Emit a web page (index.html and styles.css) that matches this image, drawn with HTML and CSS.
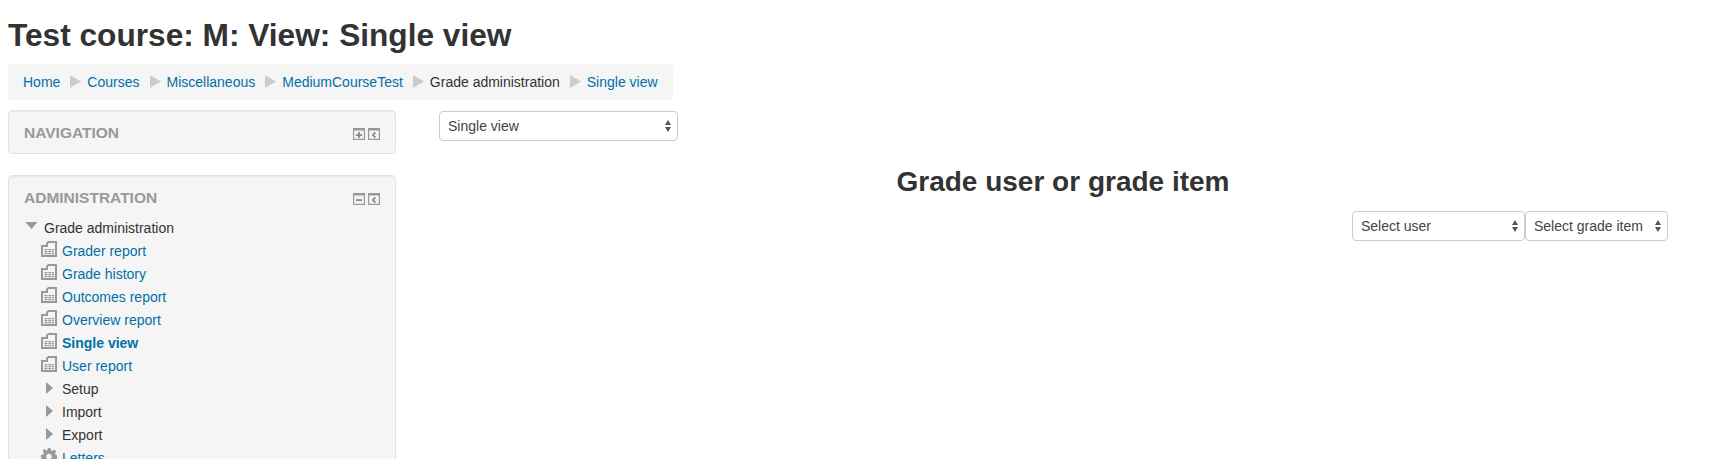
FILE: index.html
```html
<!DOCTYPE html>
<html lang="en">
<head>
<meta charset="utf-8">
<title>Test course: M: View: Single view</title>
<link rel="stylesheet" href="styles.css">
</head>
<body>
<svg class="defs" width="0" height="0" aria-hidden="true">
  <defs>
    <symbol id="sep" viewBox="0 0 11 13" preserveAspectRatio="none"><path d="M0 0L11 6.500L0 13Z" fill="#ccc"/></symbol>
    <symbol id="report" viewBox="0 0 16 16"><path fill-rule="evenodd" fill="#999" d="M0 4H5V2L7 0H16V16H0ZM2 6V14H14V2H7.500L7 3V6Z"/><path fill="#999" d="M3.500 8h3v1.200h-3zM7.300 8h3v1.200h-3zM11 8h2v1.200h-2zM3.500 10h3v1.200h-3zM7.300 10h3v1.200h-3zM11 10h2v1.200h-2zM3.500 12h3v1.200h-3zM7.300 12h3v1.200h-3zM11 12h2v1.200h-2z"/></symbol>
    <symbol id="gear" viewBox="0 0 16 16"><path fill-rule="evenodd" fill="#999" d="M6.500 0h3l.4 2.300 1.300.6L13.200 1.500l2.100 2.100-1.400 2 .6 1.400 2.500.5v3l-2.500.4-.6 1.400 1.400 2-2.100 2.100-2-1.400-1.300.5-.4 2.500h-3l-.4-2.500-1.400-.5-2 1.400-2.100-2.100 1.400-2-.6-1.400L0 10V7l2.300-.5.6-1.400-1.400-2L3.600 1l2 1.400 1.400-.6ZM8 5.700a2.800 2.800 0 1 0 .01 0Z"/></symbol>
    <symbol id="updown" viewBox="0 0 6 12"><path d="M3 0L6 5H0ZM3 12L0 7H6Z" fill="#555"/></symbol>
    <symbol id="ctl-plus" viewBox="0 0 12 12"><rect x=".6" y=".6" width="10.800" height="10.800" fill="#f4f4f4" stroke="#999" stroke-width="1.200"/><rect width="12" height="2.500" fill="#999"/><path d="M3 6.200h6v1.800H3zM5.100 4.100h1.800v6H5.100z" fill="#888"/></symbol>
    <symbol id="ctl-minus" viewBox="0 0 12 12"><rect x=".6" y=".6" width="10.800" height="10.800" fill="#f4f4f4" stroke="#999" stroke-width="1.200"/><rect width="12" height="2.500" fill="#999"/><path d="M3 6.200h6v1.800H3z" fill="#888"/></symbol>
    <symbol id="ctl-left" viewBox="0 0 12 12"><rect x=".6" y=".6" width="10.800" height="10.800" fill="#f4f4f4" stroke="#999" stroke-width="1.200"/><rect width="12" height="2.500" fill="#999"/><path d="M7.500 4.300L4.800 7L7.500 9.700" fill="none" stroke="#888" stroke-width="1.700"/></symbol>
  </defs>
</svg>

<header class="page-header">
  <h1 class="page-title">Test course: M: View: Single view</h1>
  <nav class="crumbs">
    <a href="#">Home</a><svg class="sep"><use href="#sep"/></svg>
    <a href="#">Courses</a><svg class="sep"><use href="#sep"/></svg>
    <a href="#">Miscellaneous</a><svg class="sep"><use href="#sep"/></svg>
    <a href="#">MediumCourseTest</a><svg class="sep"><use href="#sep"/></svg>
    <span>Grade administration</span><svg class="sep"><use href="#sep"/></svg>
    <a href="#">Single view</a>
  </nav>
</header>

<div class="layout">
  <aside class="side">
    <section class="block block-nav">
      <div class="block-head">
        <h2 class="block-title">NAVIGATION</h2>
        <div class="block-ctl">
          <svg class="ctl"><use href="#ctl-plus"/></svg>
          <svg class="ctl"><use href="#ctl-left"/></svg>
        </div>
      </div>
    </section>
    <section class="block block-admin">
      <div class="block-head">
        <h2 class="block-title">ADMINISTRATION</h2>
        <div class="block-ctl">
          <svg class="ctl"><use href="#ctl-minus"/></svg>
          <svg class="ctl"><use href="#ctl-left"/></svg>
        </div>
      </div>
      <ul class="tree">
        <li class="branch top"><svg class="tw-down" viewBox="0 0 14 8"><path d="M0 0H14L7 8Z" fill="#999"/></svg><span>Grade administration</span></li>
        <li class="leaf"><svg class="ic"><use href="#report"/></svg><a href="#">Grader report</a></li>
        <li class="leaf"><svg class="ic"><use href="#report"/></svg><a href="#">Grade history</a></li>
        <li class="leaf"><svg class="ic"><use href="#report"/></svg><a href="#">Outcomes report</a></li>
        <li class="leaf"><svg class="ic"><use href="#report"/></svg><a href="#">Overview report</a></li>
        <li class="leaf"><svg class="ic"><use href="#report"/></svg><a class="current" href="#">Single view</a></li>
        <li class="leaf"><svg class="ic"><use href="#report"/></svg><a href="#">User report</a></li>
        <li class="leaf"><span class="tw-box"><svg class="tw-right" viewBox="0 0 7 12"><path d="M0 0L7 6L0 12Z" fill="#999"/></svg></span><span>Setup</span></li>
        <li class="leaf"><span class="tw-box"><svg class="tw-right" viewBox="0 0 7 12"><path d="M0 0L7 6L0 12Z" fill="#999"/></svg></span><span>Import</span></li>
        <li class="leaf"><span class="tw-box"><svg class="tw-right" viewBox="0 0 7 12"><path d="M0 0L7 6L0 12Z" fill="#999"/></svg></span><span>Export</span></li>
        <li class="leaf"><svg class="ic"><use href="#gear"/></svg><a href="#">Letters</a></li>
      </ul>
    </section>
  </aside>

  <main class="main">
    <div class="sel sel-view">
      <select><option>Single view</option></select>
      <svg class="arrows"><use href="#updown"/></svg>
    </div>
    <h2 class="main-title">Grade user or grade item</h2>
    <div class="pickers">
      <div class="sel sel-user">
        <select><option>Select user</option></select>
        <svg class="arrows"><use href="#updown"/></svg>
      </div>
      <div class="sel sel-item">
        <select><option>Select grade item</option></select>
        <svg class="arrows"><use href="#updown"/></svg>
      </div>
    </div>
  </main>
</div>
</body>
</html>
```

FILE: styles.css
```css
html, body {
  height: 459px;
  overflow: hidden;
}
body {
  margin: 0;
  padding: 0 8px;
  background: #fff;
  color: #333;
  font-family: "Liberation Sans", Arial, sans-serif;
  font-size: 14px;
  line-height: 23px;
}
a {
  color: #0070a8;
  text-decoration: none;
}
.defs {
  position: absolute;
}
.page-header {
  padding-top: 18px;
}
.page-title {
  margin: 0 0 11px;
  font-size: 31.65px;
  line-height: 35px;
  font-weight: bold;
  color: #333;
}
.crumbs {
  display: inline-flex;
  align-items: center;
  height: 36px;
  padding: 0 15px;
  background: #f5f5f5;
  border-radius: 4px;
  vertical-align: top;
}
.sep {
  width: 11px;
  height: 13px;
  margin: 0 6px 2px 10px;
}
.layout {
  display: flex;
  margin-top: 10px;
}
.side {
  flex: 0 0 388px;
}
.block {
  box-sizing: border-box;
  background: #f5f5f5;
  border: 1px solid #e3e3e3;
  border-radius: 4px;
  box-shadow: inset 0 1px 1px rgba(0, 0, 0, .05);
  padding: 0 15px;
}
.block-nav {
  height: 44px;
  margin-bottom: 21px;
}
.block-head {
  display: flex;
  align-items: center;
  justify-content: space-between;
  height: 41px;
}
.block-title {
  margin: 2px 0 0;
  font-size: 15.5px;
  font-weight: bold;
  color: #999;
}
.block-ctl {
  display: flex;
  gap: 3px;
  margin-top: 4px;
}
.ctl {
  width: 12px;
  height: 12px;
}
.tree {
  list-style: none;
  margin: 0;
  padding: 0;
}
.branch, .leaf {
  display: flex;
  align-items: center;
  height: 23px;
}
.leaf {
  padding-left: 17px;
}
.tw-down {
  width: 13px;
  height: 7px;
  margin: 0 6px 6px 1px;
}
.ic {
  flex: none;
  width: 16px;
  height: 16px;
  margin: 0 5px 6px 0;
}
.tw-box {
  display: flex;
  flex: none;
  justify-content: center;
  width: 16px;
  margin: 0 5px 3px 0;
}
.tw-right {
  width: 7px;
  height: 12px;
}
.current {
  font-weight: bold;
}
.main {
  flex: 1;
  padding: 1px 0 0 43px;
}
.sel {
  position: relative;
  width: 239px;
  height: 30px;
}
.sel select {
  box-sizing: border-box;
  width: 100%;
  height: 100%;
  padding: 0 8px;
  appearance: none;
  background: #fff;
  border: 1px solid #ccc;
  border-radius: 4px;
  color: #444;
  font: 14px "Liberation Sans", Arial, sans-serif;
}
.arrows {
  position: absolute;
  top: 9px;
  right: 7px;
  width: 6px;
  height: 12px;
}
.main-title {
  width: 1248px;
  margin: 25px 0 0;
  text-align: center;
  font-size: 28px;
  line-height: 32px;
  font-weight: bold;
}
.pickers {
  display: flex;
  width: 1229px;
  margin-top: 13px;
  justify-content: flex-end;
}
.sel-user {
  width: 173px;
}
.sel-item {
  width: 143px;
}
```
